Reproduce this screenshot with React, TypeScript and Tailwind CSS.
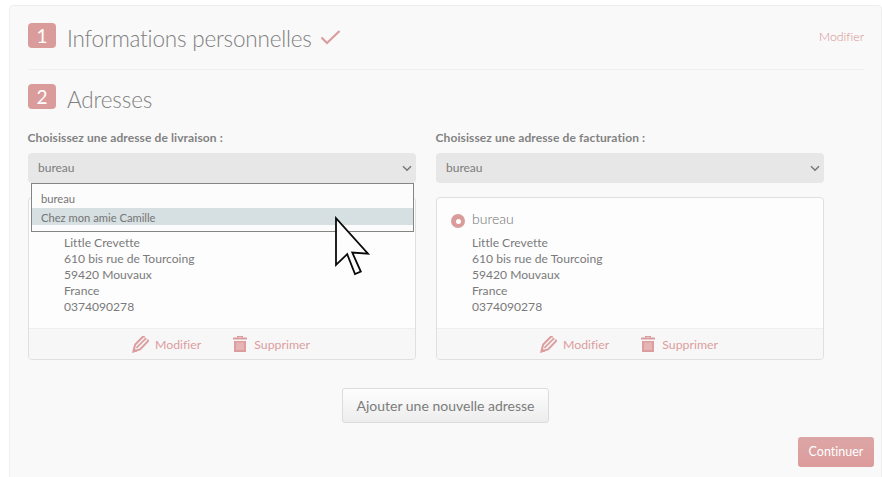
interface Address {
  alias: string;
  lines: string[];
}

interface AddressColumnProps {
  label: string;
  address: Address;
  options?: string[];
}

const OFFICE: Address = {
  alias: "bureau",
  lines: [
    "Little Crevette",
    "610 bis rue de Tourcoing",
    "59420 Mouvaux",
    "France",
    "0374090278",
  ],
};

function PencilIcon() {
  return (
    <svg width="17" height="17" viewBox="0 0 17 17" fill="none" stroke="#dc9d9e" aria-hidden="true">
      <path d="M1.5 15L3.2 8.6L10.8 0.8H12.8" strokeWidth="2" />
      <path d="M4.4 11.8L14.2 2.2" strokeWidth="1.7" />
      <path d="M1.5 15.2L8 13.4L15.8 5.4V3.4" strokeWidth="2" />
      <path d="M0 17L1.6 11.6L5.2 15.4Z" fill="#dc9d9e" stroke="none" />
    </svg>
  );
}

function TrashIcon() {
  return (
    <svg width="14" height="16" viewBox="0 0 14 16" fill="#dc9d9e" aria-hidden="true">
      <path d="M4 0h6v1.5h4v2H0v-2h4zM5.2 1v.5h3.6V1z" fillRule="evenodd" />
      <path d="M1 5h12v11H1z" />
      <path d="M4 6.5v7.5M6 6.5v7.5M8 6.5v7.5M10 6.5v7.5" stroke="#efcccc" strokeWidth="1" />
    </svg>
  );
}

function StepNumber({ value }: { value: number }) {
  return (
    <span className="flex h-[25px] w-7 items-center justify-center rounded-[4px] bg-[#da9c9b] text-[19px] leading-none text-white">
      {value}
    </span>
  );
}

function AddressColumn({ label, address, options }: AddressColumnProps) {
  return (
    <div className="w-[388px]">
      <div className="-ml-px h-[23px] pl-[0.5px] text-[12px] leading-4 font-bold tracking-[0.1px] text-[#828282]">
        {label}
      </div>
      <div className="relative">
        <div className="flex h-[30px] items-center justify-between rounded-[4px] bg-[#e7e7e7] pr-1 pl-2.5 text-[12px] text-[#7c7c7c]">
          {address.alias}
          <svg width="10" height="7" viewBox="0 0 10 7" fill="none" aria-hidden="true">
            <path d="M1 1.2L5 5.2L9 1.2" stroke="#777777" strokeWidth="1.5" />
          </svg>
        </div>
        {options && (
          <div className="absolute top-[30px] left-[3px] z-10 h-[49px] w-[383px] border border-[#858585] bg-[#fcfcfc] pt-[7px] text-[11.2px] text-[#757575]">
            {options.map((option, i) => (
              <div
                key={option}
                className={
                  i === 1
                    ? "h-[17px] bg-[#d6dfe1] pl-[9px] leading-[19px]"
                    : "h-[17px] pl-[9px] leading-[16px]"
                }
              >
                {option}
              </div>
            ))}
            <svg
              className="absolute top-[32px] left-[302px]"
              width="38"
              height="62"
              viewBox="0 0 38 62"
              fill="none"
              aria-hidden="true"
            >
              <path
                d="M2 2.2V49L13.2 38.2L21 58L26.8 55.6L18.3 36.6L34 37.6Z"
                fill="#fdfdfd"
                stroke="#0a0a0a"
                strokeWidth="1.8"
              />
            </svg>
          </div>
        )}
      </div>

      <div className="mt-3.5 h-[163px] rounded-[4px] border border-[#dfdfdf] bg-[#fdfdfd]">
        <div className="flex h-[130px] flex-col pt-3">
          <div className="flex h-5 items-center pl-3.5">
            {/* the open list covers this row */}
            {!options && (
              <>
                <span className="mt-[2px] flex size-3.5 items-center justify-center rounded-full bg-[#da9c9b]">
                  <span className="size-[5px] rounded-full bg-white" />
                </span>
                <span className="-mt-[3px] ml-[7px] text-[14px] font-light text-[#707070]">
                  {address.alias}
                </span>
              </>
            )}
          </div>
          <div className="mt-[5px] pl-[35px] text-[12.1px] leading-4 text-[#7a7a7a]">
            {address.lines.map((line) => (
              <div key={line}>{line}</div>
            ))}
          </div>
        </div>
        <div className="flex h-[31px] items-center justify-center rounded-b-[3px] border-t border-[#eeeeee] bg-[#f7f7f7] pr-[2px] text-[12.3px] text-[#dc9d9e]">
          <PencilIcon />
          <span className="mt-[3px] ml-1.5">Modifier</span>
          <span className="ml-8">
            <TrashIcon />
          </span>
          <span className="mt-[3px] ml-[7px]">Supprimer</span>
        </div>
      </div>
    </div>
  );
}

export default function App() {
  return (
    <div className="h-[477px] overflow-hidden bg-white pt-[5px] pl-[9px] font-['Lato',sans-serif] [font-variant-ligatures:none]">
      <div className="flex h-[480px] flex-col rounded-t-[4px] border border-[#eeeeee] bg-[#f9f9f9] pl-[18px]">
        <div className="mr-[17px] flex h-[64px] border-b border-[#efefef] pt-[17px]">
          <StepNumber value={1} />
          <h1 className="ml-[11px] text-[22.5px] leading-[31px] font-light tracking-[-0.2px] text-[#808080]">
            Informations personnelles
          </h1>
          <svg className="mt-1.5 ml-2" width="21" height="17" viewBox="0 0 21 17" fill="none" aria-hidden="true">
            <path d="M1.5 8.5L7 14L19.5 2" stroke="#dc9d9e" strokeWidth="2.2" />
          </svg>
          <span className="ml-auto pt-1.5 text-[12.3px] leading-4 font-light text-[#d48c8d]">
            Modifier
          </span>
        </div>
        <div className="flex h-[60px] pt-3.5">
          <StepNumber value={2} />
          <h1 className="ml-[11px] text-[22.5px] leading-[31px] font-light tracking-[-0.15px] text-[#808080]">
            Adresses
          </h1>
        </div>

        <div className="flex gap-5">
          <AddressColumn
            label="Choisissez une adresse de livraison :"
            address={OFFICE}
            options={["bureau", "Chez mon amie Camille"]}
          />
          <AddressColumn label="Choisissez une adresse de facturation :" address={OFFICE} />
        </div>

        <button
          type="button"
          className="mt-7 ml-[314px] h-[35px] w-[207px] shrink-0 rounded-[3px] border border-[#dcdcdc] bg-linear-to-b from-[#fdfdfd] to-[#ededed] text-[14px] text-[#7c7c7c]"
        >
          Ajouter une nouvelle adresse
        </button>
        <button
          type="button"
          className="mt-3.5 mr-[7px] h-[30px] w-[76px] shrink-0 self-end rounded-[3px] bg-linear-to-b from-[#dca6a6] to-[#dd9b9b] text-[12.5px] text-white"
        >
          Continuer
        </button>
      </div>
    </div>
  );
}
